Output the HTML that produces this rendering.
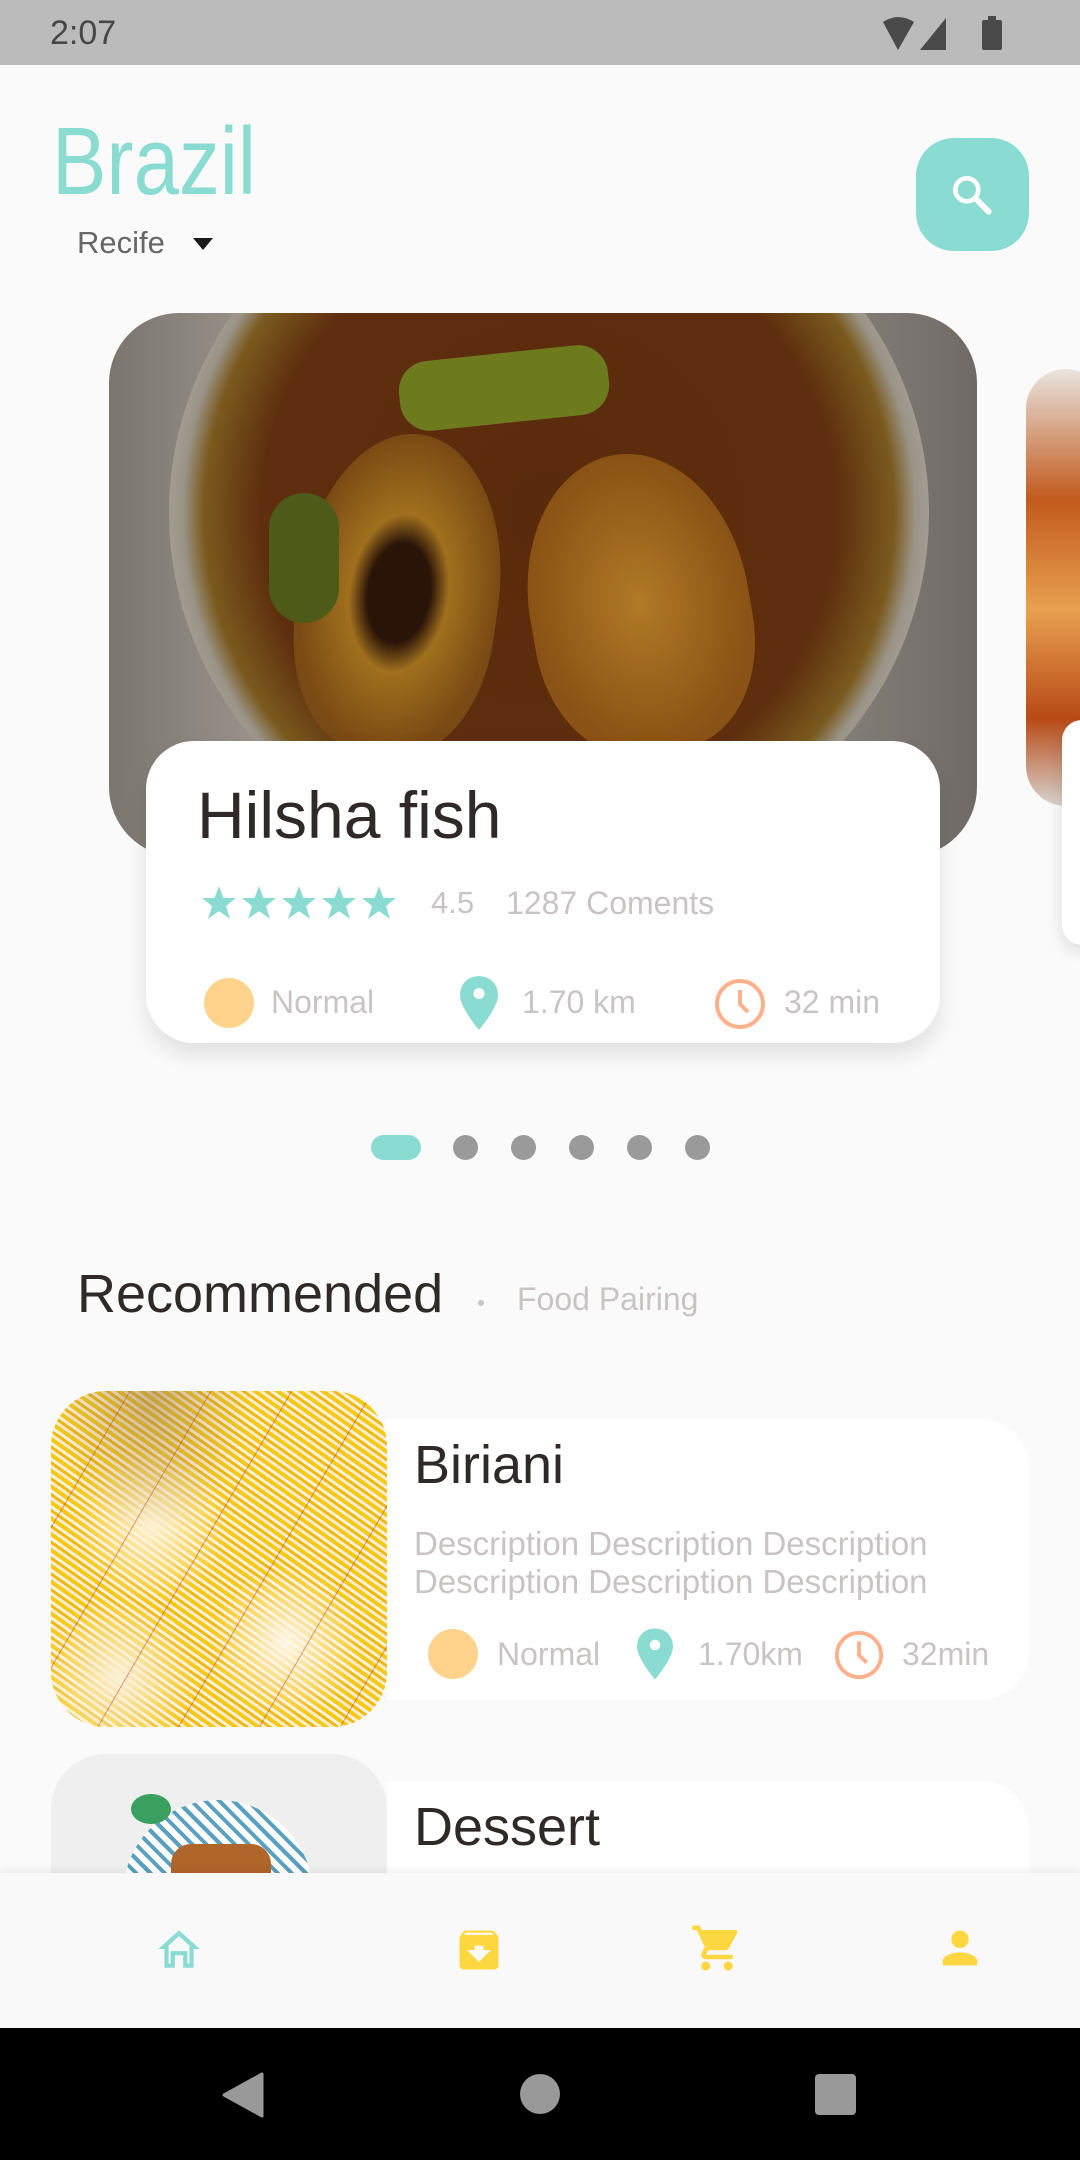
<!DOCTYPE html>
<html><head><meta charset="utf-8"><style>
*{margin:0;padding:0;box-sizing:border-box}
body{width:1080px;height:2160px;position:relative;overflow:hidden;background:#fafafa;font-family:"Liberation Sans",Roboto,sans-serif}
.a{position:absolute}
.t{position:absolute;white-space:nowrap;line-height:1}
.g{color:#c9c4c4}
</style></head><body>
<div class="a" style="left:0;top:0;width:1080px;height:65px;background:#bbbbbb"></div>
<div class="t" style="left:50px;top:16px;font-size:34px;color:#474747">2:07</div>
<svg class="a" style="left:880px;top:14px" width="130" height="40" viewBox="0 0 130 40">
<path d="M3 8 Q18 -2 34 8 L18 36 Z" fill="#4a4a4a"/><path d="M40 36 L66 4 L66 36 Z" fill="#4a4a4a"/><rect x="102" y="6" width="20" height="30" rx="2" fill="#4a4a4a"/><rect x="108" y="2" width="8" height="5" fill="#4a4a4a"/></svg>

<div class="t" style="left:52px;top:114px;font-size:96px;color:#8adcd2;transform:scaleX(0.85);transform-origin:0 0">Brazil</div>
<div class="t" style="left:77px;top:227px;font-size:31px;color:#666">Recife</div>
<svg class="a" style="left:192px;top:236px" width="22" height="16"><path d="M1 2 H21 L11 14 Z" fill="#1a1a1a"/></svg>
<div class="a" style="left:916px;top:138px;width:113px;height:113px;border-radius:38px;background:#8adcd2"></div>
<svg class="a" style="left:947px;top:170px" width="50" height="50" viewBox="0 0 24 24"><circle cx="9.5" cy="9.5" r="5.5" fill="none" stroke="#fff" stroke-width="2.2"/><path d="M13.5 13.5 L20 20" stroke="#fff" stroke-width="2.8" stroke-linecap="round"/></svg>

<!-- hero -->
<div class="a" style="left:109px;top:313px;width:868px;height:544px;border-radius:70px;overflow:hidden;background:linear-gradient(90deg,#7b7570,#9e9890 20%,#8a847e 80%,#6f6a66)">
<div class="a" style="left:60px;top:-160px;width:760px;height:720px;border-radius:50%;background:radial-gradient(circle,#5a2a0c 0,#5e2e0e 55%,#7a5a1e 66%,#9a9488 70%,#b5b0a5 78%,#8e8a84 84%,transparent 86%)"></div>
<div class="a" style="left:190px;top:120px;width:200px;height:320px;border-radius:50% 50% 40% 40%;background:radial-gradient(ellipse,#2a1408 0 22%,#a0701e 35%,#7a4a14 70%);transform:rotate(8deg)"></div>
<div class="a" style="left:420px;top:140px;width:220px;height:300px;border-radius:50% 50% 40% 40%;background:radial-gradient(ellipse,#b07a28,#8a5214 70%);transform:rotate(-10deg)"></div>
<div class="a" style="left:290px;top:40px;width:210px;height:70px;border-radius:30px;background:#6e7a1e;transform:rotate(-6deg)"></div>
<div class="a" style="left:160px;top:180px;width:70px;height:130px;border-radius:40px;background:#4e5a18"></div>
</div>
<div class="a" style="left:1026px;top:369px;width:80px;height:437px;border-radius:60px;overflow:hidden;background:linear-gradient(180deg,#e9e4df,#c25a1c 30%,#e8a050 55%,#b84a16 80%,#d9d4d0)"></div>
<div class="a" style="left:1062px;top:720px;width:40px;height:225px;border-radius:40px;background:#fff;box-shadow:0 6px 16px rgba(0,0,0,.12)"></div>

<div class="a" style="left:146px;top:741px;width:794px;height:302px;border-radius:48px;background:#fff;box-shadow:0 12px 22px rgba(0,0,0,.1)"></div>
<div class="t" style="left:197px;top:782px;font-size:66px;color:#2f2a28">Hilsha fish</div>
<svg class="a" style="left:200px;top:884px" width="202" height="38" viewBox="0 0 202 38">
<g fill="#8adcd2"><path id="s" d="M19 2 L23.5 14 L36 14 L26 22 L30 35 L19 27 L8 35 L12 22 L2 14 L14.5 14 Z"/><use href="#s" x="40"/><use href="#s" x="80"/><use href="#s" x="120"/><use href="#s" x="160"/></g></svg>
<div class="t g" style="left:431px;top:887px;font-size:31px">4.5</div>
<div class="t g" style="left:506px;top:887px;font-size:32px">1287 Coments</div>
<div class="a" style="left:204px;top:978px;width:50px;height:50px;border-radius:50%;background:#ffd38c"></div>
<div class="t g" style="left:271px;top:986px;font-size:32px">Normal</div>
<svg class="a" style="left:460px;top:976px" width="38" height="54" viewBox="0 0 24 34"><path d="M12 0 C5 0 0 5 0 12 C0 20 12 34 12 34 C12 34 24 20 24 12 C24 5 19 0 12 0 Z" fill="#8adcd2"/><circle cx="12" cy="11" r="3.5" fill="#fff"/></svg>
<div class="t g" style="left:522px;top:986px;font-size:32px">1.70 km</div>
<svg class="a" style="left:713px;top:977px" width="54" height="54" viewBox="0 0 54 54"><circle cx="27" cy="27" r="23" fill="none" stroke="#ffb08a" stroke-width="4"/><path d="M27 13 V27 L35 35" fill="none" stroke="#ffb08a" stroke-width="4"/></svg>
<div class="t g" style="left:784px;top:986px;font-size:32px">32 min</div>

<div class="a" style="left:371px;top:1135px;width:50px;height:25px;border-radius:13px;background:#8adcd2"></div>
<div class="a" style="left:453px;top:1135px;width:25px;height:25px;border-radius:50%;background:#9a9a9a"></div>
<div class="a" style="left:511px;top:1135px;width:25px;height:25px;border-radius:50%;background:#9a9a9a"></div>
<div class="a" style="left:569px;top:1135px;width:25px;height:25px;border-radius:50%;background:#9a9a9a"></div>
<div class="a" style="left:627px;top:1135px;width:25px;height:25px;border-radius:50%;background:#9a9a9a"></div>
<div class="a" style="left:685px;top:1135px;width:25px;height:25px;border-radius:50%;background:#9a9a9a"></div>

<div class="t" style="left:77px;top:1267px;font-size:54px;color:#2f2a28">Recommended</div>
<div class="a" style="left:478px;top:1300px;width:6px;height:6px;border-radius:50%;background:#c9c4c4"></div>
<div class="t g" style="left:517px;top:1283px;font-size:32px">Food Pairing</div>

<!-- biriani -->
<div class="a" style="left:387px;top:1419px;width:642px;height:281px;border-radius:0 48px 48px 0;background:#fff"></div>
<div class="a" style="left:51px;top:1391px;width:336px;height:336px;border-radius:55px;overflow:hidden;background:radial-gradient(circle at 30% 40%,#fff4d8 0,transparent 25%),radial-gradient(circle at 70% 75%,#fff6e6 0,transparent 22%),radial-gradient(circle at 20% 85%,#fbf0d6 0,transparent 20%),repeating-linear-gradient(35deg,#f5c81a 0 4px,#fbeecb 4px 7px,#f0b810 7px 10px,#fff3dc 10px 13px)">
<div class="a" style="inset:0;background:repeating-linear-gradient(-60deg,transparent 0 40px,rgba(190,40,20,.45) 40px 41px,transparent 41px 70px)"></div>
<div class="a" style="inset:0;background:radial-gradient(ellipse at 30% 0,rgba(150,120,80,.5),transparent 30%)"></div></div>
<div class="t" style="left:414px;top:1438px;font-size:54px;color:#2f2a28">Biriani</div>
<div class="t g" style="left:414px;top:1525px;font-size:33px;line-height:38px">Description Description Description<br>Description Description Description</div>
<div class="a" style="left:428px;top:1629px;width:50px;height:50px;border-radius:50%;background:#ffd38c"></div>
<div class="t g" style="left:497px;top:1638px;font-size:32px">Normal</div>
<svg class="a" style="left:637px;top:1628px" width="36" height="52" viewBox="0 0 24 34"><path d="M12 0 C5 0 0 5 0 12 C0 20 12 34 12 34 C12 34 24 20 24 12 C24 5 19 0 12 0 Z" fill="#8adcd2"/><circle cx="12" cy="11" r="3.5" fill="#fff"/></svg>
<div class="t g" style="left:698px;top:1638px;font-size:32px">1.70km</div>
<svg class="a" style="left:833px;top:1629px" width="52" height="52" viewBox="0 0 54 54"><circle cx="27" cy="27" r="23" fill="none" stroke="#ffb08a" stroke-width="4"/><path d="M27 13 V27 L35 35" fill="none" stroke="#ffb08a" stroke-width="4"/></svg>
<div class="t g" style="left:902px;top:1638px;font-size:32px">32min</div>

<!-- dessert -->
<div class="a" style="left:387px;top:1781px;width:642px;height:200px;border-radius:0 48px 0 0;background:#fff"></div>
<div class="a" style="left:51px;top:1754px;width:336px;height:300px;border-radius:55px 55px 0 0;overflow:hidden;background:#efefef">
<div class="a" style="left:72px;top:46px;width:190px;height:190px;border-radius:50%;background:repeating-linear-gradient(45deg,#5aa0c0 0 4px,#fff 4px 10px)"></div>
<div class="a" style="left:120px;top:90px;width:100px;height:90px;border-radius:20px;background:#b0652a"></div>
<div class="a" style="left:80px;top:40px;width:40px;height:30px;border-radius:50%;background:#3aa060"></div></div>
<div class="t" style="left:414px;top:1800px;font-size:54px;color:#2f2a28">Dessert</div>

<!-- bottom nav -->
<div class="a" style="left:0;top:1873px;width:1080px;height:155px;background:#f9f9f9;box-shadow:0 -3px 8px rgba(0,0,0,.06)"></div>
<svg class="a" style="left:153px;top:1924px" width="52" height="50" viewBox="0 0 24 24"><path d="M12 3 L2 12 H5 V21 H10 V15 H14 V21 H19 V12 H22 Z M12 5.8 L17 10.3 V19 H16 V13 H8 V19 H7 V10.3 Z" fill="#8adcd2"/></svg>
<svg class="a" style="left:453px;top:1924px" width="52" height="52" viewBox="0 0 24 24"><path d="M20.5 5.2 L19.1 3.5 C18.9 3.2 18.5 3 18 3 H6 C5.5 3 5.1 3.2 4.8 3.5 L3.5 5.2 C3.2 5.6 3 6 3 6.5 V19 C3 20.1 3.9 21 5 21 H19 C20.1 21 21 20.1 21 19 V6.5 C21 6 20.8 5.6 20.5 5.2 Z M12 17.5 L6.5 12 H10 V10 H14 V12 H17.5 Z M5.1 5 L5.9 4 H17.9 L18.8 5 Z" fill="#fdd73f"/></svg>
<svg class="a" style="left:690px;top:1921px" width="54" height="54" viewBox="0 0 24 24"><path d="M7 18 C5.9 18 5 18.9 5 20 S5.9 22 7 22 9 21.1 9 20 8.1 18 7 18 Z M1 2 V4 H3 L6.6 11.6 5.2 14 C5.1 14.3 5 14.7 5 15 5 16.1 5.9 17 7 17 H19 V15 H7.4 C7.3 15 7.2 14.9 7.2 14.8 L8.1 13 H15.6 C16.3 13 17 12.6 17.3 12 L20.9 5.5 C21 5.3 21 5.2 21 5 21 4.4 20.6 4 20 4 H5.2 L4.3 2 Z M17 18 C15.9 18 15 18.9 15 20 S15.9 22 17 22 19 21.1 19 20 18.1 18 17 18 Z" fill="#fdd73f"/></svg>
<svg class="a" style="left:934px;top:1922px" width="52" height="52" viewBox="0 0 24 24"><path d="M12 12 C14.2 12 16 10.2 16 8 S14.2 4 12 4 8 5.8 8 8 9.8 12 12 12 Z M12 14 C9.3 14 4 15.3 4 18 V20 H20 V18 C20 15.3 14.7 14 12 14 Z" fill="#fdd73f"/></svg>

<div class="a" style="left:0;top:2028px;width:1080px;height:132px;background:#000"></div>
<svg class="a" style="left:222px;top:2072px" width="42" height="46"><path d="M40 2 V44 L2 23 Z" fill="#999" stroke="#999" stroke-width="3" stroke-linejoin="round"/></svg>
<div class="a" style="left:520px;top:2074px;width:40px;height:40px;border-radius:50%;background:#999"></div>
<div class="a" style="left:815px;top:2074px;width:41px;height:41px;border-radius:4px;background:#999"></div>
</body></html>
